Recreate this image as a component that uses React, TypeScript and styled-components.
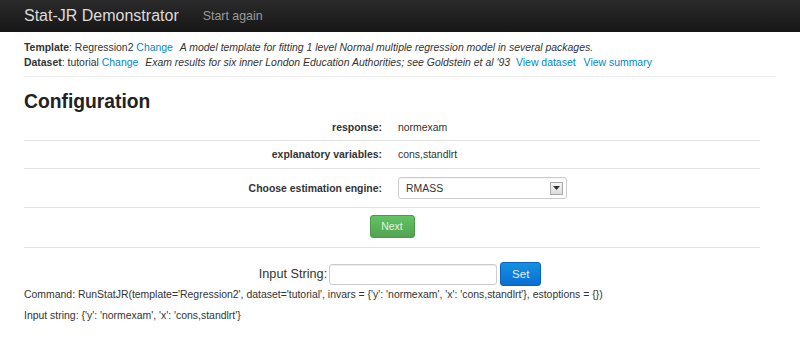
import React from "react";
import styled, { createGlobalStyle } from "styled-components";

const Global = createGlobalStyle`
  html, body { margin: 0; padding: 0; background: #fff; }
  body { font-family: "Liberation Sans", Arial, sans-serif; color: #333; font-size: 10.45px; }
`;

const Navbar = styled.div`
  height: 32px;
  background: linear-gradient(#2b2b2b, #161616);
  display: flex;
  align-items: center;
  padding-left: 24px;
  gap: 24px;
`;

const Brand = styled.span`
  font-size: 16px;
  color: #dcdcdc;
  line-height: 32px;
`;

const NavLink = styled.span`
  font-size: 12.4px;
  color: #9a9a9a;
  line-height: 32px;
`;

const Container = styled.div`
  padding: 0 24px;
`;

const Info = styled.div`
  padding-top: 8px;
  line-height: 15px;
`;

const InfoLine = styled.div`
  white-space: nowrap;
`;

const Key = styled.b``;

const Link = styled.a<{ $gap?: number }>`
  color: #0088cc;
  text-decoration: none;
  margin-right: ${(p) => p.$gap ?? 0}px;
`;

const Desc = styled.i`
  margin-left: 4px;
  margin-right: 6px;
`;

const Rule = styled.div`
  margin-top: 6px;
  border-top: 1px solid #eee;
`;

const Heading = styled.h2`
  margin: 13px 0 0;
  font-size: 19.3px;
  line-height: 24px;
  font-weight: bold;
  color: #222;
`;

const Table = styled.div`
  width: 736px;
  border-bottom: 1px solid #e2e2e2;
`;

const Row = styled.div<{ $h: number; $first?: boolean }>`
  display: grid;
  grid-template-columns: 366px 1fr;
  height: ${(p) => p.$h}px;
  align-items: center;
  border-top: ${(p) => (p.$first ? "none" : "1px solid #e2e2e2")};
  box-sizing: border-box;
`;

const Label = styled.div`
  text-align: right;
  font-weight: bold;
  padding-right: 8px;
`;

const Value = styled.div`
  padding-left: 8px;
`;

const Select = styled.div`
  width: 169px;
  height: 22px;
  box-sizing: border-box;
  border: 1px solid #ccc;
  border-radius: 3px;
  display: flex;
  align-items: center;
  justify-content: space-between;
  padding: 0 3px 0 7px;
  background: #fff;
  box-shadow: inset 0 1px 1px rgba(0,0,0,0.05);
`;

const Arrow = styled.span`
  width: 13px;
  height: 13px;
  box-sizing: border-box;
  border: 1px solid #aaa;
  background: linear-gradient(#f6f6f6, #dcdcdc);
  display: flex;
  align-items: center;
  justify-content: center;
`;

const ButtonRow = styled.div`
  height: 40px;
  border-top: 1px solid #e2e2e2;
  display: flex;
  align-items: center;
  justify-content: center;
  box-sizing: border-box;
`;

const Btn = styled.button<{ $kind: "success" | "primary" }>`
  font-family: "Liberation Sans", Arial, sans-serif;
  font-size: 10.45px;
  border-radius: 3px;
  cursor: pointer;
  color: ${(p) => (p.$kind === "success" ? "#e3f2e3" : "#e4f0ff")};
  background: ${(p) =>
    p.$kind === "success"
      ? "linear-gradient(#62c462, #51a351)"
      : "linear-gradient(#1591e0, #0a6ed3)"};
  border: 1px solid ${(p) => (p.$kind === "success" ? "#4a9a4a" : "#0a62c0")};
  padding: 0;
`;

const NextBtn = styled(Btn)`
  width: 45px;
  height: 23px;
  margin-top: -2px;
`;

const SetBtn = styled(Btn)`
  width: 41px;
  height: 24px;
  margin-left: 3px;
  font-size: 11.5px;
`;

const InputGroup = styled.div`
  display: flex;
  justify-content: center;
  align-items: center;
  margin-top: 14px;
`;

const InputLabel = styled.span`
  font-size: 12.7px;
  color: #333;
  margin-right: 2px;
`;

const TextInput = styled.input`
  width: 168px;
  height: 21px;
  box-sizing: border-box;
  border: 1px solid #ccc;
  border-radius: 3px;
  box-shadow: inset 0 1px 1px rgba(0,0,0,0.075);
  padding: 2px 4px;
  font-family: "Liberation Sans", Arial, sans-serif;
`;

const Output = styled.div<{ $mt: number }>`
  margin-top: ${(p) => p.$mt}px;
  line-height: 15px;
  white-space: nowrap;
`;

export default function App() {
  return (
    <>
      <Global />
      <Navbar>
        <Brand>Stat-JR Demonstrator</Brand>
        <NavLink>Start again</NavLink>
      </Navbar>
      <Container>
        <Info>
          <InfoLine>
            <Key>Template</Key>: Regression2 <Link href="#">Change</Link>{" "}
            <Desc>A model template for fitting 1 level Normal multiple regression model in several packages.</Desc>
          </InfoLine>
          <InfoLine>
            <Key>Dataset</Key>: tutorial <Link href="#">Change</Link>{" "}
            <Desc>Exam results for six inner London Education Authorities; see Goldstein et al '93</Desc>
            <Link href="#" $gap={8}>View dataset</Link>
            <Link href="#">View summary</Link>
          </InfoLine>
        </Info>
        <Rule />
        <Heading>Configuration</Heading>
        <Table>
          <Row $h={26} $first>
            <Label>response:</Label>
            <Value>normexam</Value>
          </Row>
          <Row $h={28}>
            <Label>explanatory variables:</Label>
            <Value>cons,standlrt</Value>
          </Row>
          <Row $h={39}>
            <Label>Choose estimation engine:</Label>
            <Value>
              <Select>
                <span>RMASS</span>
                <Arrow>
                  <svg width="7" height="4" viewBox="0 0 7 4">
                    <path d="M0 0 L7 0 L3.5 4 Z" fill="#333" />
                  </svg>
                </Arrow>
              </Select>
            </Value>
          </Row>
          <ButtonRow>
            <NextBtn $kind="success">Next</NextBtn>
          </ButtonRow>
        </Table>
        <InputGroup>
          <InputLabel>Input String:</InputLabel>
          <TextInput />
          <SetBtn $kind="primary">Set</SetBtn>
        </InputGroup>
        <Output $mt={1}>
          Command: RunStatJR(template='Regression2', dataset='tutorial', invars = {"{"}'y': 'normexam', 'x': 'cons,standlrt'{"}"}, estoptions = {"{}"})
        </Output>
        <Output $mt={6}>
          Input string: {"{"}'y': 'normexam', 'x': 'cons,standlrt'{"}"}
        </Output>
      </Container>
    </>
  );
}
